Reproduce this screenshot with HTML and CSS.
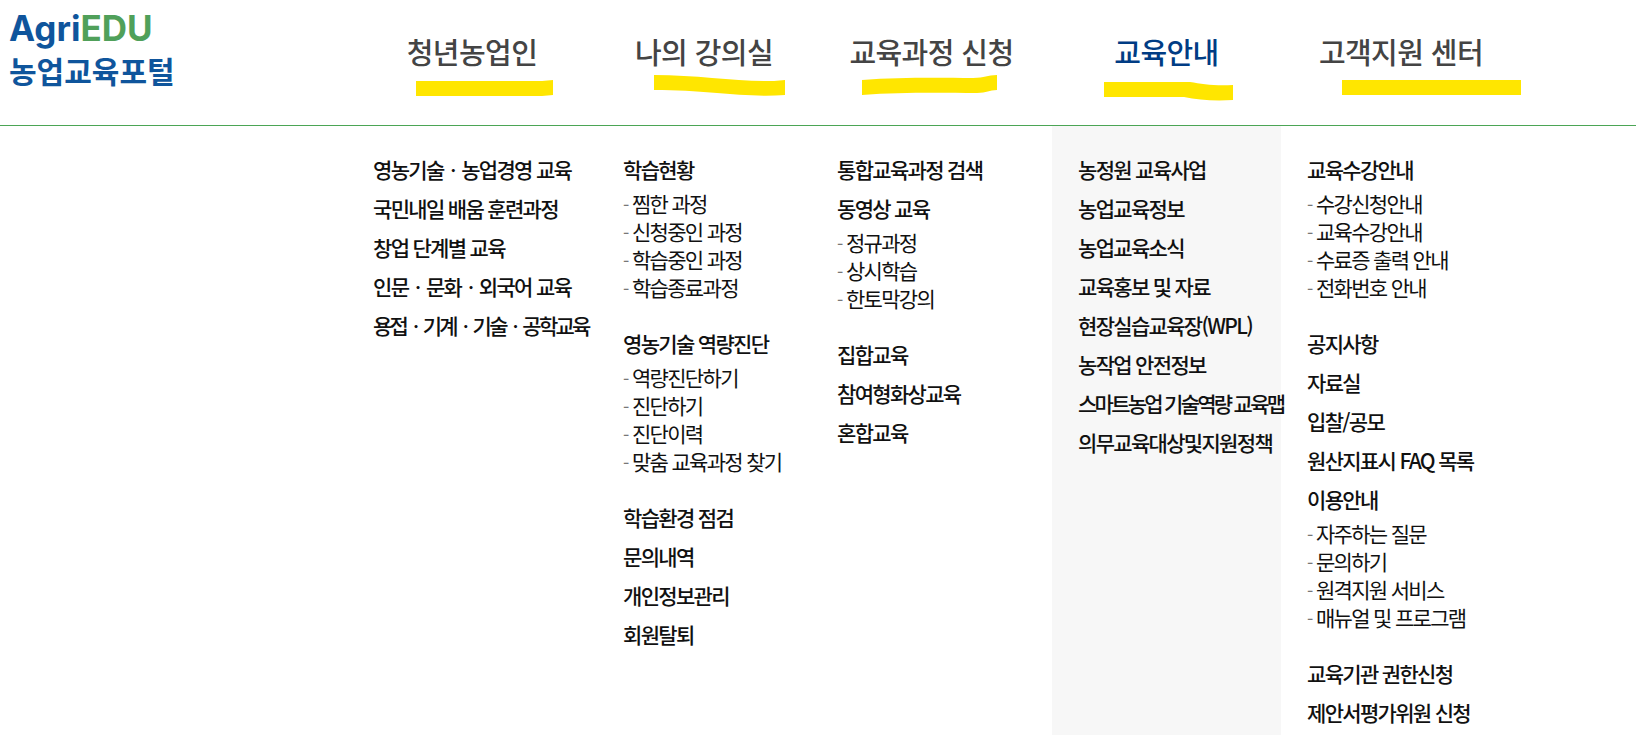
FILE: index.html
```html
<!DOCTYPE html>
<html lang="ko">

<head>
  <meta charset="UTF-8" />
  <meta name="viewport" content="width=device-width, initial-scale=1.0" />
  <title>농업교육포털</title>
  <link rel="stylesheet" href="styles.css">
</head>

<body>
  <header class="header grid">
    <a class="logo" href="#">
      <span class="logo-en">Agri<em>EDU</em></span>
      <span class="logo-ko">농업교육포털</span>
    </a>
    <!-- 대메뉴 -->
    <div class="gnb">
      <a href="#">청년농업인</a>
      <svg class="marker" viewBox="0 0 240 36"><path d="M64 11H190L201 10V25L190 26H64Z" /></svg>
    </div>
    <div class="gnb">
      <a href="#">나의 강의실</a>
      <svg class="marker" viewBox="0 0 240 36"><path d="M70 5C115 5 155 12 190 11L201 10V25C160 28 125 20 70 20Z" /></svg>
    </div>
    <div class="gnb">
      <a href="#">교육과정 신청</a>
      <svg class="marker" viewBox="0 0 240 36"><path d="M50 10C90 7 130 8 161 8C173 8 175 5 185 5V20C177 20 175 23 165 23C130 23 90 22 50 25Z" /></svg>
    </div>
    <div class="gnb">
      <a class="on" href="#">교육안내</a>
      <svg class="marker" viewBox="0 0 240 36"><path d="M57 12H143C155 14 167 16 186 15V30C167 31 151 30 137 27H57Z" /></svg>
    </div>
    <div class="gnb">
      <a href="#">고객지원 센터</a>
      <svg class="marker" viewBox="0 0 240 36"><path d="M61 10H240V25H61Z" /></svg>
    </div>
  </header>

  <!-- 전체 하위메뉴 -->
  <nav class="submenu grid">
    <ul class="col first">
      <li><a href="#">영농기술ㆍ농업경영 교육</a></li>
      <li><a href="#">국민내일 배움 훈련과정</a></li>
      <li><a href="#">창업 단계별 교육</a></li>
      <li><a href="#">인문ㆍ문화ㆍ외국어 교육</a></li>
      <li><a class="tight" href="#">용접ㆍ기계ㆍ기술ㆍ공학교육</a></li>
    </ul>
    <ul class="col">
      <li><a href="#">학습현황</a>
        <ul class="depth">
          <li><a href="#">찜한 과정</a></li>
          <li><a href="#">신청중인 과정</a></li>
          <li><a href="#">학습중인 과정</a></li>
          <li><a href="#">학습종료과정</a></li>
        </ul>
      </li>
      <li><a href="#">영농기술 역량진단</a>
        <ul class="depth">
          <li><a href="#">역량진단하기</a></li>
          <li><a href="#">진단하기</a></li>
          <li><a href="#">진단이력</a></li>
          <li><a href="#">맞춤 교육과정 찾기</a></li>
        </ul>
      </li>
      <li><a href="#">학습환경 점검</a></li>
      <li><a href="#">문의내역</a></li>
      <li><a href="#">개인정보관리</a></li>
      <li><a href="#">회원탈퇴</a></li>
    </ul>
    <ul class="col">
      <li><a href="#">통합교육과정 검색</a></li>
      <li><a href="#">동영상 교육</a>
        <ul class="depth">
          <li><a href="#">정규과정</a></li>
          <li><a href="#">상시학습</a></li>
          <li><a href="#">한토막강의</a></li>
        </ul>
      </li>
      <li><a href="#">집합교육</a></li>
      <li><a href="#">참여형화상교육</a></li>
      <li><a href="#">혼합교육</a></li>
    </ul>
    <ul class="col on">
      <li><a href="#">농정원 교육사업</a></li>
      <li><a href="#">농업교육정보</a></li>
      <li><a href="#">농업교육소식</a></li>
      <li><a href="#">교육홍보 및 자료</a></li>
      <li><a href="#">현장실습교육장(WPL)</a></li>
      <li><a href="#">농작업 안전정보</a></li>
      <li><a class="tight" href="#">스마트농업 기술역량 교육맵</a></li>
      <li><a href="#">의무교육대상및지원정책</a></li>
    </ul>
    <ul class="col">
      <li><a href="#">교육수강안내</a>
        <ul class="depth">
          <li><a href="#">수강신청안내</a></li>
          <li><a href="#">교육수강안내</a></li>
          <li><a href="#">수료증 출력 안내</a></li>
          <li><a href="#">전화번호 안내</a></li>
        </ul>
      </li>
      <li><a href="#">공지사항</a></li>
      <li><a href="#">자료실</a></li>
      <li><a href="#">입찰/공모</a></li>
      <li><a href="#">원산지표시 FAQ 목록</a></li>
      <li><a href="#">이용안내</a>
        <ul class="depth">
          <li><a href="#">자주하는 질문</a></li>
          <li><a href="#">문의하기</a></li>
          <li><a href="#">원격지원 서비스</a></li>
          <li><a href="#">매뉴얼 및 프로그램</a></li>
        </ul>
      </li>
      <li><a href="#">교육기관 권한신청</a></li>
      <li><a href="#">제안서평가위원 신청</a></li>
    </ul>
  </nav>
</body>

</html>
```
FILE: styles.css
```css
* {
  margin: 0;
  padding: 0;
  box-sizing: border-box;
}

ul {
  list-style: none;
}

a {
  color: inherit;
  text-decoration: none;
}

body {
  display: flex;
  flex-direction: column;
  min-height: 100vh;
  background: #fff;
  color: #111;
  font-family: "Noto Sans CJK KR", sans-serif;
}

.grid {
  display: grid;
  grid-template-columns: 347fr 250fr 214fr 241fr 229fr 240fr 115fr;
}

.header {
  height: 126px;
  border-bottom: 1px solid #4ba555;
}

.logo {
  padding: 8px 0 0 9px;
  color: #0f559c;
  font-weight: bold;
  white-space: nowrap;
}

.logo span {
  display: block;
}

.logo-en {
  font-family: Inter, sans-serif;
  font-size: 35px;
  line-height: 40px;
}

.logo-en em {
  color: #50a05a;
  font-style: normal;
}

.logo-ko {
  font-size: 30px;
  line-height: 44px;
}

.gnb {
  position: relative;
  padding-top: 31px;
  color: #444;
  font-size: 29px;
  font-weight: 500;
  line-height: 40px;
  letter-spacing: -0.02em;
  text-align: center;
  white-space: nowrap;
}

.gnb .on {
  color: #003c84;
}

/* 형광펜 밑줄 */
.marker {
  position: absolute;
  top: 70px;
  left: 50%;
  width: 240px;
  height: 36px;
  margin-left: -120px;
  fill: #ffe600;
}

.submenu {
  flex: 1;
}

.col {
  min-width: 0;
  padding: 24px 0 0 26px;
  font-size: 21px;
  font-weight: 500;
  line-height: 39px;
  letter-spacing: -0.08em;
  white-space: nowrap;
}

.col.first {
  grid-column: 2;
}

.col.on {
  background: #f7f7f7;
}

.col .tight {
  letter-spacing: -0.13em;
}

.depth {
  padding-bottom: 23px;
  font-weight: 400;
  line-height: 28px;
}

.depth li::before {
  content: "- ";
  margin-right: 1px;
  color: #777;
  font-size: 18px;
  line-height: 1;
}
```
